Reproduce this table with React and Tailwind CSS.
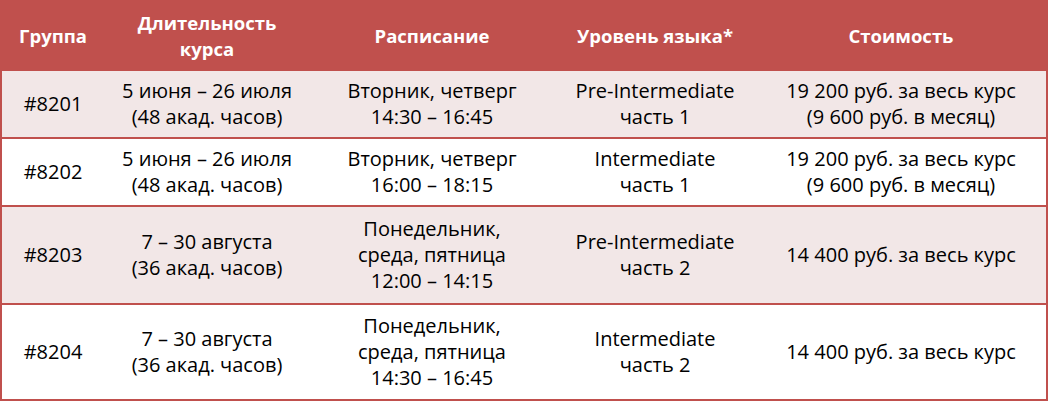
import React from 'react';

const rows = [
  {
    group: '#8201',
    duration: ['5 июня – 26 июля', '(48 акад. часов)'],
    schedule: ['Вторник, четверг', '14:30 – 16:45'],
    level: ['Pre-Intermediate', 'часть 1'],
    price: ['19 200 руб. за весь курс', '(9 600 руб. в месяц)'],
    tone: 'bg-[#f2e7e7]',
    height: 'h-[66px]',
  },
  {
    group: '#8202',
    duration: ['5 июня – 26 июля', '(48 акад. часов)'],
    schedule: ['Вторник, четверг', '16:00 – 18:15'],
    level: ['Intermediate', 'часть 1'],
    price: ['19 200 руб. за весь курс', '(9 600 руб. в месяц)'],
    tone: 'bg-white',
    height: 'h-[66px]',
  },
  {
    group: '#8203',
    duration: ['7 – 30 августа', '(36 акад. часов)'],
    schedule: ['Понедельник,', 'среда, пятница', '12:00 – 14:15'],
    level: ['Pre-Intermediate', 'часть 2'],
    price: ['14 400 руб. за весь курс'],
    tone: 'bg-[#f2e7e7]',
    height: 'h-[96px]',
  },
  {
    group: '#8204',
    duration: ['7 – 30 августа', '(36 акад. часов)'],
    schedule: ['Понедельник,', 'среда, пятница', '14:30 – 16:45'],
    level: ['Intermediate', 'часть 2'],
    price: ['14 400 руб. за весь курс'],
    tone: 'bg-white',
    height: 'h-[94px]',
  },
];

const cols = 'grid grid-cols-[102px_206px_244px_202px_290px]';

function Cell({ lines }) {
  return (
    <div className="flex flex-col items-center justify-center text-center whitespace-nowrap">
      {lines.map((line) => (
        <span key={line}>{line}</span>
      ))}
    </div>
  );
}

export default function App() {
  return (
    <div className="w-[1048px] h-[403px] bg-white font-['Open_Sans',sans-serif] text-[20px] leading-[26px] text-black">
      <div className="w-[1048px] border-x-2 border-b-2 border-[#c0504d] bg-[#c0504d]">
        <div className={`${cols} h-[71px] text-white font-bold text-[18.5px]`}>
          <Cell lines={['Группа']} />
          <Cell lines={['Длительность', 'курса']} />
          <Cell lines={['Расписание']} />
          <Cell lines={['Уровень языка*']} />
          <Cell lines={['Стоимость']} />
        </div>
        <div className="flex flex-col gap-[2px]">
          {rows.map((r) => (
            <div key={r.group} className={`${cols} ${r.height} ${r.tone}`}>
              <Cell lines={[r.group]} />
              <Cell lines={r.duration} />
              <Cell lines={r.schedule} />
              <Cell lines={r.level} />
              <Cell lines={r.price} />
            </div>
          ))}
        </div>
      </div>
    </div>
  );
}
